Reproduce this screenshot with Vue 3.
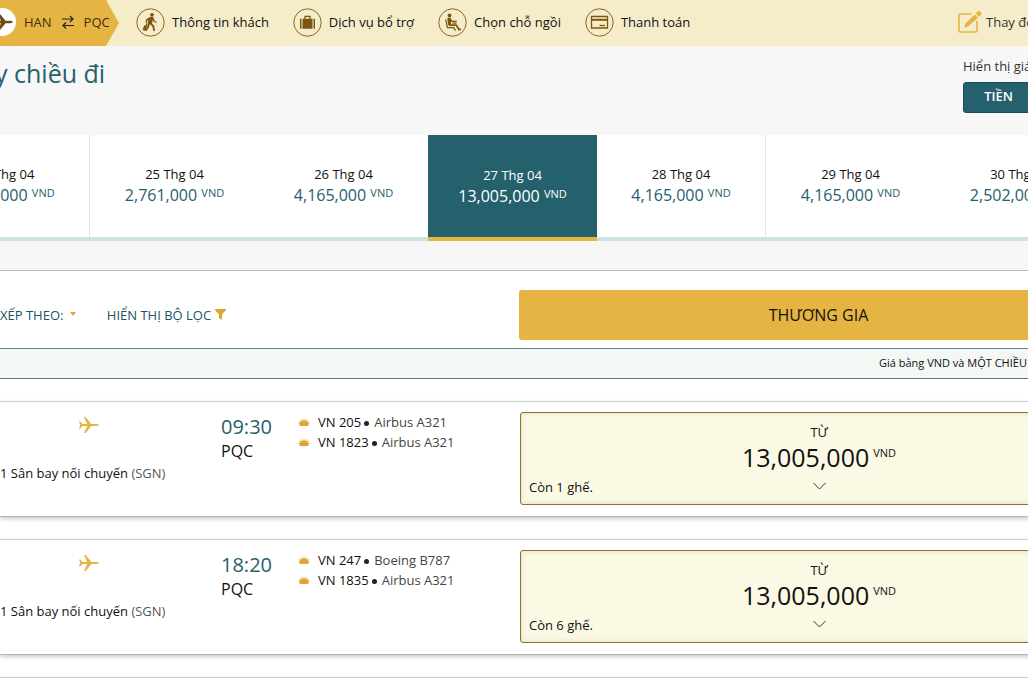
<script setup>
const steps = [
  { id: 'guest', label: 'Thông tin khách' },
  { id: 'extras', label: 'Dịch vụ bổ trợ' },
  { id: 'seat', label: 'Chọn chỗ ngồi' },
  { id: 'pay', label: 'Thanh toán' }
]

const days = [
  { date: '24 Thg 04', price: '2,502,000', divided: true },
  { date: '25 Thg 04', price: '2,761,000' },
  { date: '26 Thg 04', price: '4,165,000' },
  { date: '27 Thg 04', price: '13,005,000', selected: true },
  { date: '28 Thg 04', price: '4,165,000', divided: true },
  { date: '29 Thg 04', price: '4,165,000' },
  { date: '30 Thg 04', price: '2,502,000' }
]

const flights = [
  {
    time: '09:30',
    price: '13,005,000',
    seats: 'Còn 1 ghế.',
    legs: [
      { code: 'VN 205', plane: 'Airbus A321' },
      { code: 'VN 1823', plane: 'Airbus A321' }
    ]
  },
  {
    time: '18:20',
    price: '13,005,000',
    seats: 'Còn 6 ghế.',
    legs: [
      { code: 'VN 247', plane: 'Boeing B787' },
      { code: 'VN 1835', plane: 'Airbus A321' }
    ]
  }
]
</script>

<template>
  <div class="page">
    <header class="topbar">
      <div class="route">
        <span class="route-badge">
          <svg class="route-plane" width="20" height="16" viewBox="0 0 20 16"><path d="M0 3h1.500l2.500 3.700h4L5 0h2l5.500 6.700h5q2 .3 2.500 1.300q-.5 1-2.500 1.300h-5L7 16H5l3-6.700H4L1.500 13H0l1.500-5z" /></svg>
        </span>
        <span>HAN</span>
        <svg class="swap" width="12" height="14" viewBox="0 0 12 14"><path d="M0 4h11M8 1l3 3-3 3M12 10.500H1M4 7.500l-3 3 3 3" /></svg>
        <span>PQC</span>
      </div>
      <nav class="steps">
        <a v-for="s in steps" :key="s.id" class="step" href="#">
          <svg class="step-icon" width="29" height="29" viewBox="0 0 29 29">
            <circle class="ring" cx="14.500" cy="14.500" r="13.700" />
            <g v-if="s.id === 'guest'">
              <circle class="fill" cx="16" cy="6.800" r="1.900" />
              <path class="fill" d="M13.500 9.200l2.500-.4 1.600 1 1 2.900 2.200 1.400-.6 1-2.700-1.500-.8-1.700-.6 3.500 2.200 2.700.7 4.800h-1.700l-.8-4.100-2.600-2.800-.8 3-2.500 4-1.300-.8 2.100-3.900.8-6.500-.8.500-.5 2.700-1.300-.2.500-3.500z" />
              <path class="fill" d="M8.300 17l2.900 1-1.700 4.900-2.900-1z" />
              <path class="line" d="M10.300 18l.7-2.500" />
            </g>
            <g v-else-if="s.id === 'extras'">
              <path class="fill" d="M7 10.700h1.500v10H7zM9.500 10.700h10v10h-10zM20.500 10.700H22v10h-1.500z" />
              <path class="line" d="M12 11V8.300h5V11" />
            </g>
            <g v-else-if="s.id === 'seat'">
              <circle class="fill" cx="11.500" cy="7.500" r="1.900" />
              <path class="fill" d="M9.300 10l3-.2 2.200 2.900h4.300V14h-5l-.9-1 .3 3.200h5.600l2.700 4.600 1.500-.5v1.700l-2.400.8-2.800-4.700h-6.300l-1.300-1.200z" />
              <path class="line" d="M7.800 11.500l1.600 8.200h6.400l1.700 3M14.500 15.200h4" />
            </g>
            <g v-else>
              <path class="line" d="M6.500 8.500h16v11.500h-16z" />
              <path class="fill" d="M6.500 10.800h16v2h-16z" />
              <path class="line" d="M14.500 17.500h5.500" />
            </g>
          </svg>
          <span>{{ s.label }}</span>
        </a>
      </nav>
      <a class="modify" href="#">
        <svg width="24" height="24" viewBox="0 0 24 24">
          <path class="modify-frame" d="M13.500 4H2.500Q1 4 1 5.500v15Q1 22 2.500 22h15q1.500 0 1.500-1.500V11" />
          <path class="modify-pen" d="M17.700 3.500l2.300-2.300q.8-.7 1.600 0l1.700 1.700q.7.800 0 1.600L21 6.800zM16.800 4.500L20 7.800 10.300 16.300 6.200 18 7.300 13.500z" />
        </svg>
        <span>Thay đổi</span>
      </a>
    </header>

    <section class="intro">
      <h1>y chiều đi</h1>
      <div class="display">
        <span class="display-label">Hiển thị giá</span>
        <button class="money" type="button">TIỀN</button>
      </div>
    </section>

    <div class="strip">
      <button
        v-for="d in days"
        :key="d.date"
        type="button"
        class="day"
        :class="{ selected: d.selected, divided: d.divided }"
      >
        <span class="day-date">{{ d.date }}</span>
        <span class="day-price">{{ d.price }} <sup>VND</sup></span>
      </button>
    </div>

    <main class="results">
      <div class="toolbar">
        <div class="filters">
          <button class="filter" type="button">
            XẾP THEO:
            <svg class="caret" width="6" height="4" viewBox="0 0 6 4"><path d="M0 0h6L3 4z" /></svg>
          </button>
          <button class="filter" type="button">
            HIỂN THỊ BỘ LỌC
            <svg class="funnel" width="11" height="11" viewBox="0 0 11 11"><path d="M0 0h11v1L7 5.500V11L4 9V5.500L0 1z" /></svg>
          </button>
        </div>
        <button class="cabin" type="button">THƯƠNG GIA</button>
      </div>
      <div class="note"><span>Giá bằng VND và MỘT CHIỀU (</span></div>

      <article v-for="f in flights" :key="f.time" class="flight">
        <div class="journey">
          <svg class="plane" width="20" height="16" viewBox="0 0 20 16"><path d="M0 4.500h1.200L3.500 7h4.700L5 0h1.700l5.600 7h5.200q2 .1 2.500 1-.5.900-2.500 1h-5.200l-5.600 7H5l3.200-7H3.500l-2.300 2.500H0L1.200 8z" /></svg>
          <span class="stops">1 Sân bay nối chuyến <span class="via">(SGN)</span></span>
        </div>
        <div class="arrival">
          <span class="time">{{ f.time }}</span>
          <span class="port">PQC</span>
        </div>
        <ul class="legs">
          <li v-for="l in f.legs" :key="l.code">
            <svg class="lotus" width="12" height="8" viewBox="0 0 12 8"><path d="M6 0l.9 3.200L8.800.8l-.3 3 2.300-1.200-1 2.300 2.200.1-1.800 1.400.8.600L9.500 8h-7L1 7l.8-.6L0 5l2.200-.1-1-2.300 2.300 1.200-.3-3 1.900 2.400z" /></svg>
            <span>{{ l.code }}</span>
            <i class="dot"></i>
            <span class="craft">{{ l.plane }}</span>
          </li>
        </ul>
        <button class="fare" type="button">
          <span class="from">TỪ</span>
          <span class="amount">{{ f.price }}<sup>VND</sup></span>
          <svg class="chevron" width="13" height="8" viewBox="0 0 13 8"><path d="M.5 1l6 6 6-6" /></svg>
          <span class="seats">{{ f.seats }}</span>
        </button>
      </article>
      <div class="flight"></div>
    </main>
  </div>
</template>

<style>
body {
  margin: 0;
  background: #fff;
}
</style>

<style scoped>
.page {
  height: 100vh;
  overflow: hidden;
  background: #f7f7f7;
  color: #111;
  font-family: "Open Sans", "Noto Sans", sans-serif;
  font-size: 13px;
  line-height: 18px;
  white-space: nowrap;
}
button {
  font: inherit;
  color: inherit;
  margin: 0;
  padding: 0;
  border: 0;
  background: none;
  white-space: nowrap;
  cursor: pointer;
}
a {
  color: inherit;
  text-decoration: none;
}
.topbar {
  display: flex;
  align-items: center;
  height: 46px;
  background: #f5ecca;
  overflow: hidden;
}
.route {
  display: flex;
  align-items: center;
  box-sizing: border-box;
  flex: none;
  width: 119px;
  height: 46px;
  padding-bottom: 3px;
  background: #e6b442;
  color: #3b3013;
  clip-path: polygon(0 0, 106px 0, 100% 50%, 106px 100%, 0 100%);
}
.route-badge {
  display: flex;
  align-items: center;
  justify-content: flex-end;
  box-sizing: border-box;
  flex: none;
  width: 28px;
  height: 28px;
  margin: 0 8px 0 -12px;
  padding-right: 3px;
  border-radius: 50%;
  background: #fff;
}
.route-plane {
  fill: #6f4a12;
}
.swap {
  margin: 0 10px;
  fill: none;
  stroke: #222;
  stroke-width: 1.200;
}
.steps {
  display: flex;
  gap: 24px;
  margin-left: 17px;
  padding-bottom: 2px;
}
.step {
  display: flex;
  align-items: center;
  gap: 7px;
}
.step-icon .ring {
  fill: none;
  stroke: #8a6420;
}
.step-icon .fill {
  fill: #7d5710;
}
.step-icon .line {
  fill: none;
  stroke: #7d5710;
  stroke-width: 1.300;
}
.modify {
  display: flex;
  align-items: center;
  gap: 4px;
  width: 70px;
  margin-left: auto;
  padding-bottom: 2px;
  color: #333;
}
.modify svg {
  flex: none;
}
.modify-frame {
  fill: none;
  stroke: #e6b442;
  stroke-width: 1.600;
}
.modify-pen {
  fill: #e6b442;
}
.intro {
  display: flex;
  justify-content: space-between;
  height: 89px;
}
h1 {
  margin: 9px 0 0 -5px;
  color: #25606d;
  font-size: 25px;
  font-weight: 400;
  line-height: 36px;
}
.display {
  display: flex;
  flex-direction: column;
  gap: 7px;
  width: 65px;
  padding-top: 11px;
}
.display-label {
  color: #333;
}
.money {
  box-sizing: border-box;
  width: 71px;
  height: 31px;
  padding-bottom: 4px;
  border: 1px solid #1b4a5c;
  border-radius: 3px;
  background: #25606d;
  color: #fff;
  font-weight: 600;
}
.strip {
  display: grid;
  grid-template-columns: repeat(7, minmax(0, 1fr));
  width: calc(100% + 155px);
  margin-left: -79px;
}
.day {
  display: flex;
  flex-direction: column;
  align-items: center;
  box-sizing: border-box;
  height: 106px;
  padding-top: 30px;
  border-bottom: 4px solid #cde3de;
  background: #fff;
}
.day.divided {
  border-right: 1px solid #e2e2e2;
}
.day.selected {
  padding-top: 31px;
  border-bottom-color: #e6b442;
  background: #25606d;
  color: #fff;
}
.day-price {
  color: #25606d;
  font-size: 16px;
  line-height: 24px;
}
.selected .day-price {
  color: #fff;
}
sup {
  font-size: 11px;
  line-height: 11px;
  vertical-align: 4px;
}
.results {
  margin-top: 29px;
  border-top: 1px solid #bbb;
  background: #fff;
}
.toolbar,
.flight {
  display: grid;
  width: calc(100% + 90px);
}
.toolbar {
  grid-template-columns: 519px minmax(0, 1fr);
  align-items: center;
  height: 77px;
}
.filters {
  display: flex;
  gap: 31px;
  padding-top: 10px;
  color: #1c5362;
}
.caret {
  margin-left: 3px;
  vertical-align: 4px;
  fill: #e6a82e;
}
.funnel {
  fill: #dfa52e;
}
.cabin {
  height: 50px;
  margin-top: 10px;
  border-radius: 3px;
  background: #e6b442;
  font-size: 16px;
}
.note {
  display: flex;
  justify-content: flex-end;
  height: 29px;
  border-top: 1px solid #68858d;
  border-bottom: 1px solid #5a7a80;
  background: #f3f8f5;
  font-size: 11px;
  line-height: 28px;
}
.note span {
  width: 149px;
}
.flight {
  grid-template-columns: 221px 77px 222px minmax(0, 1fr);
  box-sizing: border-box;
  height: 116px;
  margin-top: 22px;
  padding: 10px 0 11px;
  border-top: 1px solid #ccc;
  border-bottom: 1px solid #b5b5b5;
  box-shadow: 0 2px 4px rgba(0, 0, 0, 0.2);
}
.journey {
  display: flex;
  flex-direction: column;
  gap: 31px;
  padding-top: 5px;
}
.plane {
  margin-left: 79px;
  fill: #e6b442;
}
.via {
  color: #555;
}
.arrival {
  display: flex;
  flex-direction: column;
  padding-top: 1px;
}
.time {
  color: #25606d;
  font-size: 20px;
  line-height: 28px;
}
.port {
  font-size: 16px;
  line-height: 20px;
}
.legs {
  margin: 0;
  padding: 0;
  list-style: none;
}
.legs li {
  display: flex;
  align-items: center;
  height: 20px;
}
.lotus {
  margin-right: 8px;
  fill: #dfa52e;
}
.dot {
  width: 5px;
  height: 5px;
  margin: 2px 5px 0 3px;
  border-radius: 50%;
  background: #222;
}
.craft {
  color: #444;
}
.fare {
  position: relative;
  display: flex;
  flex-direction: column;
  align-items: center;
  box-sizing: border-box;
  height: 93px;
  padding-top: 10px;
  border: 1px solid #8f6f35;
  border-radius: 3px;
  background: #fbf9e3;
  box-shadow: inset 0 0 5px rgba(120, 100, 40, 0.2);
}
.amount {
  font-size: 25px;
  line-height: 32px;
}
.amount sup {
  margin-left: 4px;
  vertical-align: 10px;
}
.chevron {
  margin-top: 9px;
  fill: none;
  stroke: #333;
}
.seats {
  position: absolute;
  left: 8px;
  bottom: 8px;
}
</style>
